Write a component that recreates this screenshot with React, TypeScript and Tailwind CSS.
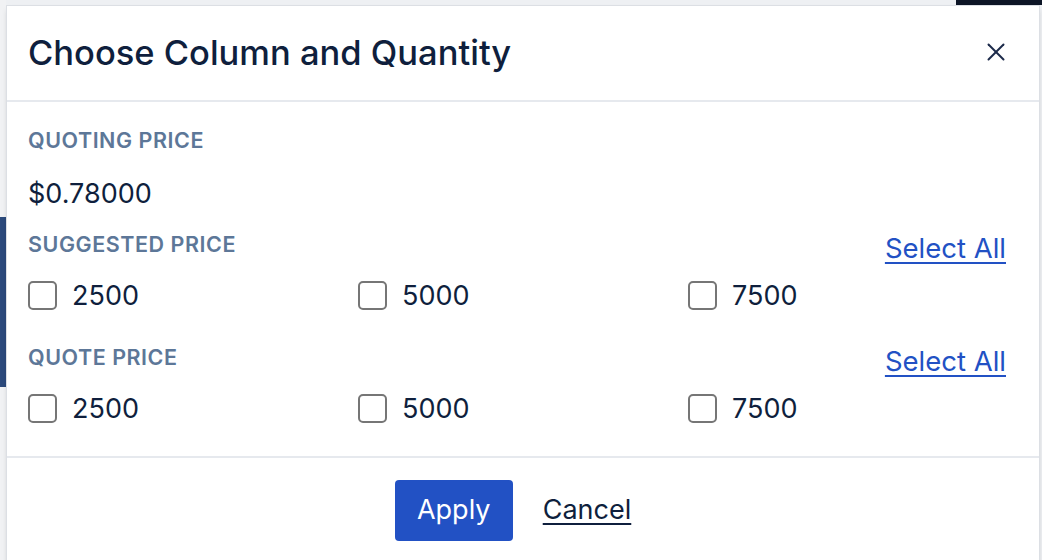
import { X } from "lucide-react";

const values = ["2500", "5000", "7500"];

const CheckRow = ({ className }: { className: string }) => {
  return (
    <div className={`flex h-[42px] items-center ${className}`}>
      {values.map((v) => (
        <label key={v} className="flex shrink-0 items-center gap-[15px] w-[330px] cursor-pointer">
          <span className="w-[29px] h-[29px] shrink-0 rounded-[5px] border-2 border-[#767676] bg-white" />
          <span className="text-[27px] leading-none text-[#0f1f3d]">{v}</span>
        </label>
      ))}
    </div>
  );
};

const Label = ({ children }: { children: string }) => (
  <span className="text-[21.5px] font-semibold tracking-[0.025em] text-[#5d7798] uppercase leading-none">
    {children}
  </span>
);

const Section = ({ title, top }: { title: string; top: string }) => {
  return (
    <>
      <div className={`flex h-[42px] items-center justify-between ${top}`}>
        <Label>{title}</Label>
        <a href="#" className="mt-[7px] text-[27.5px] leading-none text-[#2251c4] underline underline-offset-[4px]">
          Select All
        </a>
      </div>
      <CheckRow className="mt-[8px]" />
    </>
  );
};

export default function App() {
  return (
    <div
      className="relative w-[1042px] h-[560px] overflow-hidden bg-[#eef0f3] pl-[6px] pt-[5px]"
      style={{ fontFamily: "Inter, 'Noto Sans', sans-serif" }}
    >
      {/* page behind the dialog */}
      <div className="absolute left-0 top-0 w-[6px] h-full bg-[#f1f2f4]" />
      <div className="absolute left-0 top-[217px] w-[6px] h-[170px] bg-[#2c4a7c]" />
      <div className="absolute right-0 top-0 w-[86px] h-[5px] bg-[#0d1526]" />

      <div className="relative w-[1034px] h-[600px] bg-white border border-[#dcdfe4] shadow-md">
        <div className="flex items-center justify-between h-[96px] pl-[21px] pr-[28px] border-b-2 border-[#e6e9ee]">
          <h2 className="text-[34.5px] font-medium text-[#0f1f3d]">Choose Column and Quantity</h2>
          <X className="w-[30px] h-[30px] text-[#1c2a4a] mb-[3px]" strokeWidth={1.6} />
        </div>

        <div className="pl-[21px] pr-[33px] pt-[18px] h-[356px] border-b-2 border-[#e6e9ee]">
          <div className="flex h-[42px] items-center">
            <Label>Quoting Price</Label>
          </div>
          <div className="flex h-[42px] items-center mt-[10px] text-[27px] leading-none text-[#0f1f3d]">
            $0.78000
          </div>
          <Section title="Suggested Price" top="mt-[10px]" />
          <Section title="Quote Price" top="mt-[21px]" />
        </div>

        <div className="flex items-center justify-center gap-[30px] pt-[22px] pr-[20px]">
          <button className="w-[118px] h-[61px] rounded-[4px] bg-[#2251c4] text-white text-[27px]">
            Apply
          </button>
          <a href="#" className="text-[27px] text-[#0f1f3d] underline underline-offset-[4px]">
            Cancel
          </a>
        </div>
      </div>
    </div>
  );
}
